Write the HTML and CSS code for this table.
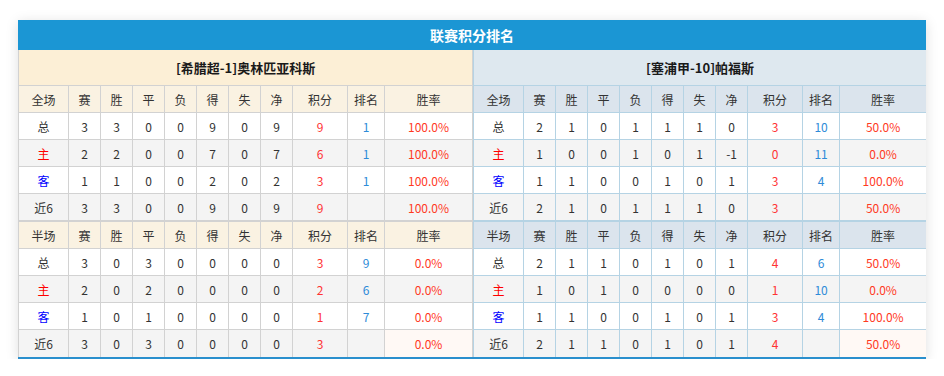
FILE: index.html
```html
<!DOCTYPE html>
<html lang="zh">
<head>
<meta charset="utf-8">
<title>联赛积分排名</title>
<link rel="stylesheet" href="styles.css">
</head>
<body>
<div class="board">
  <div class="title">联赛积分排名</div>
  <div class="sides">
    <table class="tbl home">
      <colgroup>
        <col class="c-label"><col class="c-num"><col class="c-num"><col class="c-num"><col class="c-num"><col class="c-num"><col class="c-num"><col class="c-num"><col class="c-pts"><col class="c-rank"><col class="c-rate-l">
      </colgroup>
      <tr class="team"><th colspan="11">[希腊超-1]奥林匹亚科斯</th></tr>
      <tr class="head"><th>全场</th><th>赛</th><th>胜</th><th>平</th><th>负</th><th>得</th><th>失</th><th>净</th><th>积分</th><th>排名</th><th>胜率</th></tr>
      <tr><td>总</td><td>3</td><td>3</td><td>0</td><td>0</td><td>9</td><td>0</td><td>9</td><td class="pts">9</td><td class="rank">1</td><td class="rate">100.0%</td></tr>
      <tr class="alt"><td class="home-lbl">主</td><td>2</td><td>2</td><td>0</td><td>0</td><td>7</td><td>0</td><td>7</td><td class="pts">6</td><td class="rank">1</td><td class="rate">100.0%</td></tr>
      <tr><td class="away-lbl">客</td><td>1</td><td>1</td><td>0</td><td>0</td><td>2</td><td>0</td><td>2</td><td class="pts">3</td><td class="rank">1</td><td class="rate">100.0%</td></tr>
      <tr class="alt"><td>近6</td><td>3</td><td>3</td><td>0</td><td>0</td><td>9</td><td>0</td><td>9</td><td class="pts">9</td><td class="rank"></td><td class="rate">100.0%</td></tr>
      <tr class="head half"><th>半场</th><th>赛</th><th>胜</th><th>平</th><th>负</th><th>得</th><th>失</th><th>净</th><th>积分</th><th>排名</th><th>胜率</th></tr>
      <tr><td>总</td><td>3</td><td>0</td><td>3</td><td>0</td><td>0</td><td>0</td><td>0</td><td class="pts">3</td><td class="rank">9</td><td class="rate">0.0%</td></tr>
      <tr class="alt"><td class="home-lbl">主</td><td>2</td><td>0</td><td>2</td><td>0</td><td>0</td><td>0</td><td>0</td><td class="pts">2</td><td class="rank">6</td><td class="rate">0.0%</td></tr>
      <tr><td class="away-lbl">客</td><td>1</td><td>0</td><td>1</td><td>0</td><td>0</td><td>0</td><td>0</td><td class="pts">1</td><td class="rank">7</td><td class="rate">0.0%</td></tr>
      <tr class="alt last"><td>近6</td><td>3</td><td>0</td><td>3</td><td>0</td><td>0</td><td>0</td><td>0</td><td class="pts">3</td><td class="rank"></td><td class="rate hl">0.0%</td></tr>
    </table>
    <table class="tbl away">
      <colgroup>
        <col class="c-label"><col class="c-num"><col class="c-num"><col class="c-num"><col class="c-num"><col class="c-num"><col class="c-num"><col class="c-num"><col class="c-pts"><col class="c-rank"><col class="c-rate-r">
      </colgroup>
      <tr class="team"><th colspan="11">[塞浦甲-10]帕福斯</th></tr>
      <tr class="head"><th>全场</th><th>赛</th><th>胜</th><th>平</th><th>负</th><th>得</th><th>失</th><th>净</th><th>积分</th><th>排名</th><th>胜率</th></tr>
      <tr><td>总</td><td>2</td><td>1</td><td>0</td><td>1</td><td>1</td><td>1</td><td>0</td><td class="pts">3</td><td class="rank">10</td><td class="rate">50.0%</td></tr>
      <tr class="alt"><td class="home-lbl">主</td><td>1</td><td>0</td><td>0</td><td>1</td><td>0</td><td>1</td><td>-1</td><td class="pts">0</td><td class="rank">11</td><td class="rate">0.0%</td></tr>
      <tr><td class="away-lbl">客</td><td>1</td><td>1</td><td>0</td><td>0</td><td>1</td><td>0</td><td>1</td><td class="pts">3</td><td class="rank">4</td><td class="rate">100.0%</td></tr>
      <tr class="alt"><td>近6</td><td>2</td><td>1</td><td>0</td><td>1</td><td>1</td><td>1</td><td>0</td><td class="pts">3</td><td class="rank"></td><td class="rate">50.0%</td></tr>
      <tr class="head half"><th>半场</th><th>赛</th><th>胜</th><th>平</th><th>负</th><th>得</th><th>失</th><th>净</th><th>积分</th><th>排名</th><th>胜率</th></tr>
      <tr><td>总</td><td>2</td><td>1</td><td>1</td><td>0</td><td>1</td><td>0</td><td>1</td><td class="pts">4</td><td class="rank">6</td><td class="rate">50.0%</td></tr>
      <tr class="alt"><td class="home-lbl">主</td><td>1</td><td>0</td><td>1</td><td>0</td><td>0</td><td>0</td><td>0</td><td class="pts">1</td><td class="rank">10</td><td class="rate">0.0%</td></tr>
      <tr><td class="away-lbl">客</td><td>1</td><td>1</td><td>0</td><td>0</td><td>1</td><td>0</td><td>1</td><td class="pts">3</td><td class="rank">4</td><td class="rate">100.0%</td></tr>
      <tr class="alt last"><td>近6</td><td>2</td><td>1</td><td>1</td><td>0</td><td>1</td><td>0</td><td>1</td><td class="pts">4</td><td class="rank"></td><td class="rate hl">50.0%</td></tr>
    </table>
  </div>
</div>
</body>
</html>
```
FILE: styles.css
```css
html, body {
  margin: 0;
  padding: 0;
  background: #ffffff;
}

body {
  font-family: "Noto Sans CJK SC", "Noto Sans", sans-serif;
  font-size: 12px;
  color: #333333;
}

.board {
  width: 908px;
  margin: 20px 0 0 18px;
  border-bottom: 2px solid #2a8fcd;
  box-shadow: 0 2px 12px rgba(0, 0, 0, 0.13);
}

.title {
  height: 30px;
  line-height: 30px;
  background: #1b96d4;
  color: #ffffff;
  font-size: 14px;
  font-weight: bold;
  text-align: center;
}

.sides {
  display: flex;
}

.tbl {
  border-collapse: separate;
  border-spacing: 0;
  table-layout: fixed;
}

.home {
  width: 455px;
  border-left: 1px solid #d2d2d2;
}

.away {
  width: 453px;
  border-left: 1px solid #b5d3e4;
}

.c-label { width: 50px; }
.c-num { width: 32px; }
.c-pts { width: 55px; }
.c-rank { width: 37px; }
.c-rate-l { width: 88px; }
.c-rate-r { width: 86px; }

.tbl th,
.tbl td {
  padding: 0;
  text-align: center;
  vertical-align: middle;
  font-weight: normal;
  white-space: nowrap;
  border-right: 1px solid #d2d2d2;
  border-bottom: 1px solid #d2d2d2;
}

.away th,
.away td {
  border-color: #b5d3e4;
}

.tbl tr {
  height: 27px;
}

.tbl tr.team {
  height: 36px;
}

.tbl tr.team th {
  font-size: 13px;
  font-weight: bold;
  color: #1a1a1a;
}

.home tr.team th { background: #fcefd6; }
.away tr.team th { background: #dee8ef; }

.home tr.head th { background: #faf2e2; }
.away tr.head th { background: #dbe4ed; }

.tbl tr.half {
  height: 28px;
}

.tbl tr.half th {
  border-top: 1px solid #d2d2d2;
}

.away tr.half th {
  border-top-color: #b5d3e4;
}

.tbl td { background: #ffffff; }
.tbl tr.alt td { background: #f4f4f4; }

.tbl tr.last td { border-bottom: none; }
.away td:last-child,
.away th:last-child { border-right: none; }

.tbl td.hl,
.tbl tr.alt td.hl { background: #fff9f5; }

.home-lbl { color: #ff0000; }
.away-lbl { color: #0000ff; }
.pts { color: #ff3333; }
.rank { color: #2e8bd8; }
.rate { color: #ff3a1f; }
```
